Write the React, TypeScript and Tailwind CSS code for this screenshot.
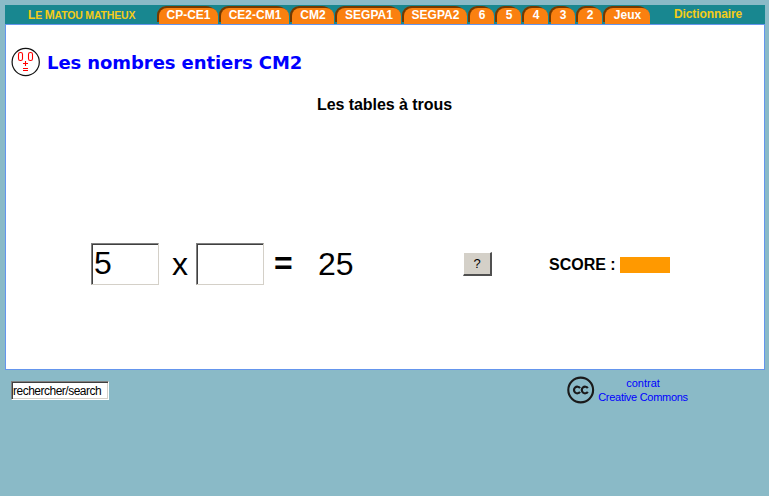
import React from "react";

const tabs = [
  { label: "CP-CE1", width: "w-[62px]" },
  { label: "CE2-CM1", width: "w-[71px]" },
  { label: "CM2", width: "w-[45px]" },
  { label: "SEGPA1", width: "w-[67px]" },
  { label: "SEGPA2", width: "w-[66px]" },
  { label: "6", width: "w-[27px]" },
  { label: "5", width: "w-[27px]" },
  { label: "4", width: "w-[27px]" },
  { label: "3", width: "w-[27px]" },
  { label: "2", width: "w-[27px]" },
  { label: "Jeux", width: "w-[48px]" },
];

function Tab({ label, width }: { label: string; width: string }) {
  return (
    <li className={`h-[18px] shrink-0 pr-px ${width}`}>
      <a className="block h-full rounded-tl-[9px] rounded-tr-[12px] bg-[linear-gradient(#733900_0_16px,#188790_16px)] pl-[2px] pt-[2px]">
        <span className="block h-4 rounded-t-[8px] bg-[#fa8010] text-center text-[12px] font-bold leading-[14px] text-white">
          {label}
        </span>
      </a>
    </li>
  );
}

function Header() {
  return (
    <header className="flex h-[19px] bg-[#188790] text-[12px] font-bold text-[#f5cc18]">
      <div className="w-[152px] whitespace-nowrap pl-[23px] text-[10.5px] font-bold uppercase leading-[20px] tracking-[-0.18px]">
        <span className="text-[12px]">L</span>e <span className="text-[12px]">M</span>atou matheux
      </div>
      <ul className="flex pt-px">
        {tabs.map((t) => (
          <Tab key={t.label} {...t} />
        ))}
      </ul>
      <div className="pl-[23px] leading-[19px] tracking-[-0.1px]">Dictionnaire</div>
    </header>
  );
}

function Face() {
  return (
    <svg className="mb-[2px] h-[30px] w-[30px] shrink-0" viewBox="0 0 30 30" fill="none">
      <circle cx="14.7" cy="15" r="13.6" stroke="#111" strokeWidth="1.2" />
      <g stroke="#f00" strokeWidth="1.1">
        <rect x="7.5" y="5.5" width="4" height="8" rx="1.8" />
        <rect x="17.5" y="5.5" width="4" height="8" rx="1.8" />
        <path d="M12 16.5h5M14.5 14v5M12 21.5h5M12 23.5h5" />
      </g>
    </svg>
  );
}

function NumberBox({ value }: { value: string }) {
  return (
    <input
      className="h-[42px] w-[68px] border border-b-[#d4d0c8] border-l-[#808080] border-r-[#d4d0c8] border-t-[#808080] bg-white pb-[2px] pl-[2px] text-[32px] text-black shadow-[inset_1px_1px_0_#404040] outline-none"
      defaultValue={value}
    />
  );
}

export default function App() {
  return (
    <div className="h-[496px] w-[769px] overflow-hidden bg-[#8abac7] pl-[5px] pt-[5px] font-['Liberation_Sans',Arial,sans-serif] text-black">
      <div className="w-[760px]">
        <Header />
        <main className="h-[346px] border border-[#6495ed] bg-white">
          <div className="flex h-[54px] items-end pl-[5px]">
            <Face />
            <h1 className="mb-px ml-[6px] whitespace-nowrap font-['DejaVu_Sans',Verdana,sans-serif] text-[18px] font-bold leading-[30px] tracking-[-0.08px] text-[#0000ff]">
              Les nombres entiers CM2
            </h1>
          </div>
          <h2 className="mt-[16px] pr-px text-center text-[16px] font-bold leading-5 tracking-[-0.05px]">
            Les tables à trous
          </h2>
          <div className="mt-[128px] flex h-[42px] items-center pl-[85px] text-[32px]">
            <NumberBox value="5" />
            <span className="w-[37px] pl-[13px]">x</span>
            <NumberBox value="" />
            <span className="mb-[2px] w-[54px] pl-[10px] font-bold">=</span>
            <span className="w-[145px]">25</span>
            <button className="h-6 w-[29px] border border-b-2 border-r-2 border-b-[#505050] border-l-white border-r-[#505050] border-t-white bg-[#d4d0c8] pt-px text-[13px] leading-5">
              ?
            </button>
            <span className="ml-[57px] mt-[2px] w-[71px] whitespace-nowrap text-[16px] font-bold">SCORE :</span>
            <span className="mt-[2px] h-4 w-[50px] bg-[#ff9900]" />
          </div>
        </main>
        <footer className="flex pl-[6px] pt-[6px] text-[11px] text-[#0000ff]">
          <input
            className="mt-[5px] h-[19px] w-[98px] border border-b-white border-l-[#808080] border-r-white border-t-[#808080] bg-white pl-px text-[12px] tracking-[-0.5px] text-black shadow-[inset_1px_1px_0_#404040,inset_-1px_-1px_0_#d4d0c8] outline-none"
            defaultValue="rechercher/search"
          />
          <svg className="ml-[458px] h-7 w-7" viewBox="0 0 28 28" fill="none" stroke="#1a1a1a">
            <circle cx="13.7" cy="14" r="12.4" strokeWidth="2.1" />
            <path d="M13 12.1a3.3 3.3 0 1 0 0 3.8M20.8 12.1a3.3 3.3 0 1 0 0 3.8" strokeWidth="2.2" />
          </svg>
          <a className="ml-[3px] w-[90px] whitespace-nowrap text-center leading-[14px]">
            contrat
            <br />
            <span className="tracking-[-0.28px]">Creative Commons</span>
          </a>
        </footer>
      </div>
    </div>
  );
}
